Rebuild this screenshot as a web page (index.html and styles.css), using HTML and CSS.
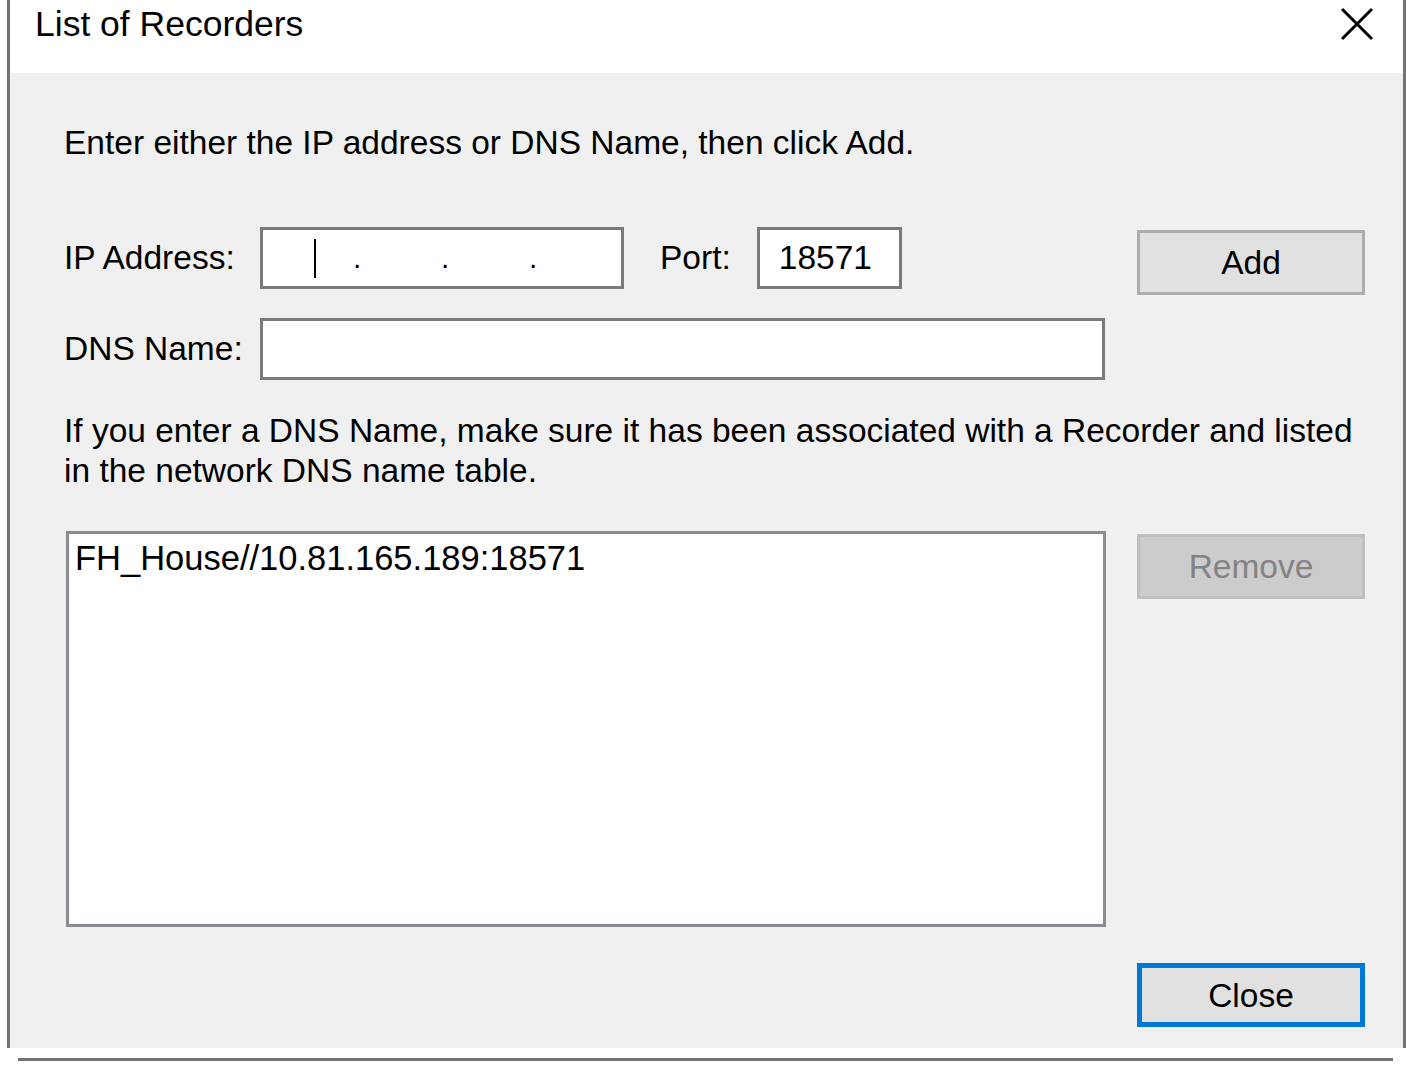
FILE: index.html
```html
<!DOCTYPE html>
<html lang="en">
<head>
    <meta charset="UTF-8">
    <title>List of Recorders</title>
    <link rel="stylesheet" href="styles.css">
</head>
<body>
    <div class="dialog">
        <div class="titlebar">
            <span class="title">List of Recorders</span>
            <svg class="close-x" width="34" height="34" viewBox="0 0 34 34">
                <path d="M2 2 L32 32 M32 2 L2 32" stroke="#000" stroke-width="3" fill="none"/>
            </svg>
        </div>

        <div class="content">
            <p class="intro">Enter either the IP address or DNS Name, then click Add.</p>

            <div class="entry">
                <div class="fields">
                    <div class="field-row">
                        <label class="label">IP Address:</label>
                        <div class="input ip-input">
                            <span class="octet first"><span class="caret"></span></span>
                            <span class="dot">.</span>
                            <span class="octet"></span>
                            <span class="dot">.</span>
                            <span class="octet"></span>
                            <span class="dot">.</span>
                            <span class="octet"></span>
                        </div>
                        <label class="label port-label">Port:</label>
                        <div class="input port-input">18571</div>
                    </div>
                    <div class="field-row">
                        <label class="label">DNS Name:</label>
                        <div class="input dns-input"></div>
                    </div>
                </div>
                <button class="btn add-btn">Add</button>
            </div>

            <p class="note">If you enter a DNS Name, make sure it has been associated with a Recorder and listed in the network DNS name table.</p>

            <div class="list-row">
                <div class="listbox">
                    <div class="list-item">FH_House//10.81.165.189:18571</div>
                </div>
                <button class="btn remove-btn" disabled>Remove</button>
            </div>

            <div class="footer">
                <button class="btn close-btn">Close</button>
            </div>
        </div>
    </div>
    <div class="window-shadow"></div>
</body>
</html>
```

FILE: styles.css
```css
body {
    margin: 0;
    background: #fff;
    font-family: 'Liberation Sans', Arial, sans-serif;
    color: #000;
}

.dialog {
    margin-left: 7px;
    width: 1393px;
    height: 1048px;
    border-left: 3px solid #737373;
    border-right: 3px solid #737373;
    display: flex;
    flex-direction: column;
}

/* bottom edge of the window shadow */
.window-shadow {
    margin: 10px 0 0 18px;
    width: 1375px;
    height: 3px;
    background: #737373;
}

.titlebar {
    height: 73px;
    background: #fff;
    display: flex;
    align-items: center;
    justify-content: space-between;
    padding: 0 29px 0 25px;
}

.title {
    font-size: 35.5px;
    margin-top: -24px;
}

.close-x {
    margin-top: -26px;
}

.content {
    flex: 1;
    background: #f0f0f0;
    padding: 50px 38px 0 54px;
    font-size: 33.5px;
}

.intro {
    margin: 0;
    line-height: 40px;
}

.entry {
    display: flex;
    gap: 31px;
    margin-top: 64px;
}

.fields {
    width: 1042px;
    display: flex;
    flex-direction: column;
    gap: 29px;
}

.field-row {
    display: flex;
    align-items: center;
}

.label {
    width: 196px;
}

.port-label {
    width: auto;
    margin: 0 26px 0 36px;
}

.input {
    box-sizing: border-box;
    height: 62px;
    border: 3px solid #7a7a7a;
    background: #fff;
    display: flex;
    align-items: center;
}

.ip-input {
    width: 364px;
}

.octet {
    width: 90px;
    height: 100%;
    display: flex;
    align-items: center;
}

.octet.first {
    padding-left: 51px;
    box-sizing: border-box;
}

.octet + .dot + .octet {
    width: 80px;
}

.dot {
    width: 8px;
    text-align: center;
    font-size: 30px;
    line-height: 1;
}

.caret {
    width: 2px;
    height: 39px;
    background: #000;
}

.port-input {
    width: 145px;
    padding-left: 19px;
}

.dns-input {
    width: 845px;
}

.btn {
    box-sizing: border-box;
    width: 228px;
    height: 65px;
    font-family: inherit;
    font-size: 33.5px;
    color: #000;
    background: #e1e1e1;
    border: 3px solid #adadad;
    padding: 0;
}

.add-btn {
    margin-top: 3px;
}

.note {
    margin: 31px 0 0 0;
    line-height: 40px;
}

.list-row {
    display: flex;
    gap: 31px;
    margin-top: 40px;
}

.listbox {
    box-sizing: border-box;
    width: 1040px;
    height: 396px;
    margin-left: 2px;
    border: 3px solid #898b93;
    background: #fff;
    padding: 4px 6px;
}

.list-item {
    font-size: 34.5px;
    line-height: 40px;
}

.remove-btn {
    margin-top: 3px;
    background: #cccccc;
    border-color: #bfbfbf;
    color: #838383;
}

.footer {
    display: flex;
    justify-content: flex-end;
    margin-top: 36px;
}

.close-btn {
    height: 64px;
    border: 5px solid #0078d7;
    padding-top: 2px;
}
```
